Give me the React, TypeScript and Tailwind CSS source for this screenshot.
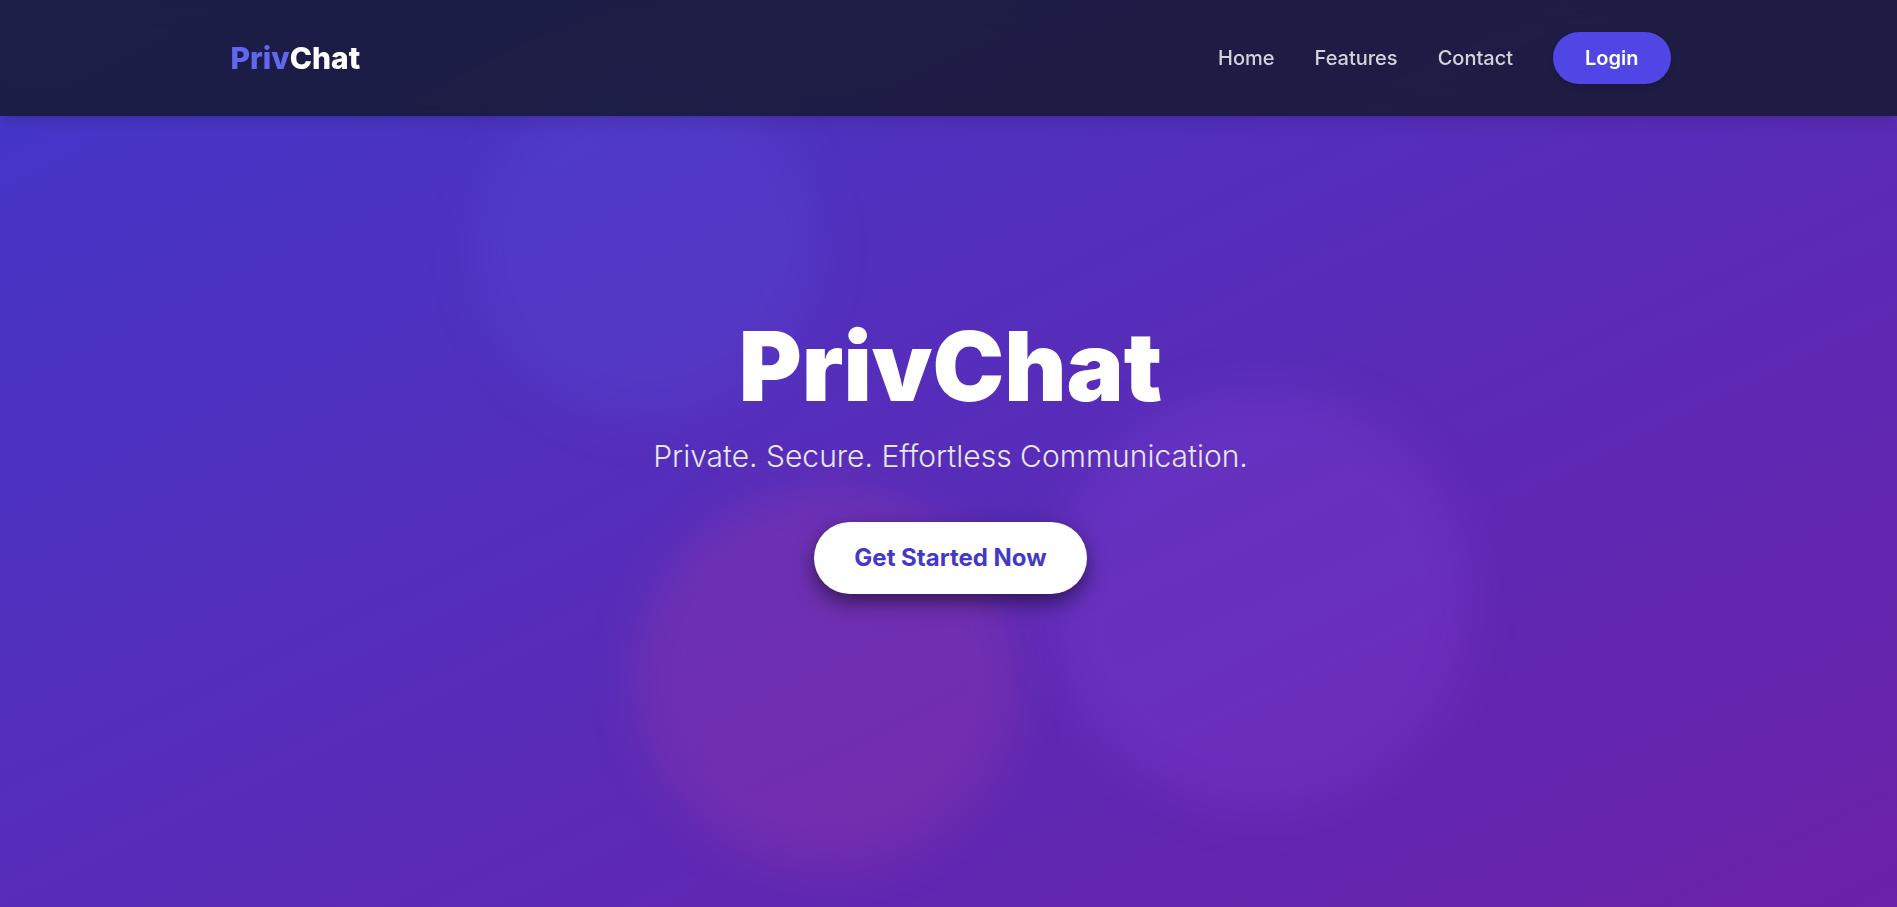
const links = ["Home", "Features", "Contact"];

export default function App() {
  return (
    <div className="min-h-screen bg-linear-to-br/srgb from-[#4338ca] to-[#6b21a8] font-[Inter,'Liberation_Sans',sans-serif] text-white">
      <header className="fixed inset-x-0 top-0 z-50 bg-[#111827]/80 pl-1 shadow-lg backdrop-blur-md">
        <nav className="mx-auto flex max-w-[1440px] items-center justify-between py-8">
          <a href="#" className="text-3xl font-extrabold">
            <span className="text-[#6366f1]">Priv</span>Chat
          </a>
          <div className="flex items-center gap-10 text-xl font-medium text-[#d1d5db]">
            {links.map((label) => (
              <a key={label} href={`#${label.toLowerCase()}`}>
                {label}
              </a>
            ))}
            <a href="#login" className="rounded-full bg-[#4f46e5] px-8 py-3 font-semibold text-white shadow-md">
              Login
            </a>
          </div>
        </nav>
      </header>

      <main className="relative isolate flex min-h-screen flex-col items-center justify-center overflow-hidden pl-1 text-center">
        <div aria-hidden="true" className="absolute inset-0 -z-10">
          <div className="absolute top-[78px] left-[476px] size-[344px] rounded-full bg-[#6366f1]/15 blur-xl" />
          <div className="absolute top-[390px] left-[1051px] size-[420px] rounded-full bg-[#a855f7]/15 blur-xl" />
          <div className="absolute top-[485px] left-[635px] size-[384px] rounded-full bg-[#ec4899]/15 blur-xl" />
        </div>
        <h1 className="text-8xl leading-[104px] font-black">PrivChat</h1>
        <p className="mt-5 text-3xl font-light text-[#e5e7eb]">Private. Secure. Effortless Communication.</p>
        <button
          type="button"
          className="mt-12 rounded-full bg-white px-10 py-5 text-2xl font-bold text-[#4338ca] shadow-[0_8px_20px_rgba(0,0,0,0.5)]"
        >
          Get Started Now
        </button>
      </main>
    </div>
  );
}
